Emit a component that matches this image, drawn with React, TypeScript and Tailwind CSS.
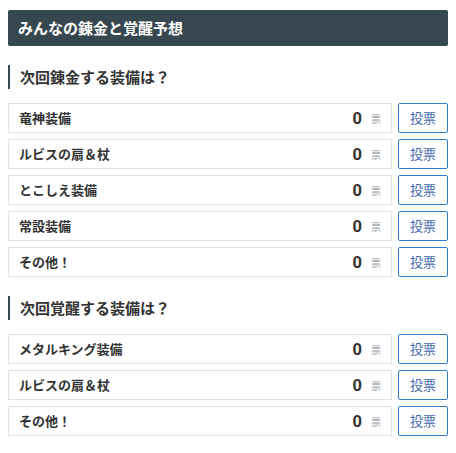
const forge = ["竜神装備", "ルビスの扇＆杖", "とこしえ装備", "常設装備", "その他！"];
const awaken = ["メタルキング装備", "ルビスの扇＆杖", "その他！"];

const VoteRow = ({ label }: { label: string }) => (
  <div className="flex gap-[6px]">
    <div className="flex h-[30px] flex-1 items-center border border-[#dde4e6] pl-[10px] pr-[10px]">
      <span className="text-[13px] font-bold text-[#333]">{label}</span>
      <span className="ml-auto font-['Liberation_Sans',sans-serif] text-[17px] font-bold leading-none text-[#333]">0</span>
      <span className="ml-[9px] text-[10px] text-[#9aa0a4]">票</span>
    </div>
    <button className="h-[30px] w-[50px] rounded-[2px] border border-[#2f7ec5] bg-white text-[13px] text-[#4467ad]">
      投票
    </button>
  </div>
);

const Section = ({ title, items }: { title: string; items: string[] }) => (
  <div className="mt-[19px]">
    <h2 className="flex h-[24px] items-center border-l-2 border-[#37474f] pl-[10px] text-[15px] font-bold text-[#333]">
      {title}
    </h2>
    <div className="mt-[14px] flex flex-col gap-[6px]">
      {items.map((item) => (
        <VoteRow key={item} label={item} />
      ))}
    </div>
  </div>
);

export default function App() {
  return (
    <div
      className="min-h-screen bg-white px-[8px] pt-[10px]"
      style={{ fontFamily: '"Noto Sans CJK JP", "Noto Sans", sans-serif' }}
    >
      <div className="flex h-[36px] items-center rounded-[2px] bg-[#37474f] pl-[10px] text-[15px] font-bold text-white">
        みんなの錬金と覚醒予想
      </div>
      <Section title="次回錬金する装備は？" items={forge} />
      <Section title="次回覚醒する装備は？" items={awaken} />
    </div>
  );
}
